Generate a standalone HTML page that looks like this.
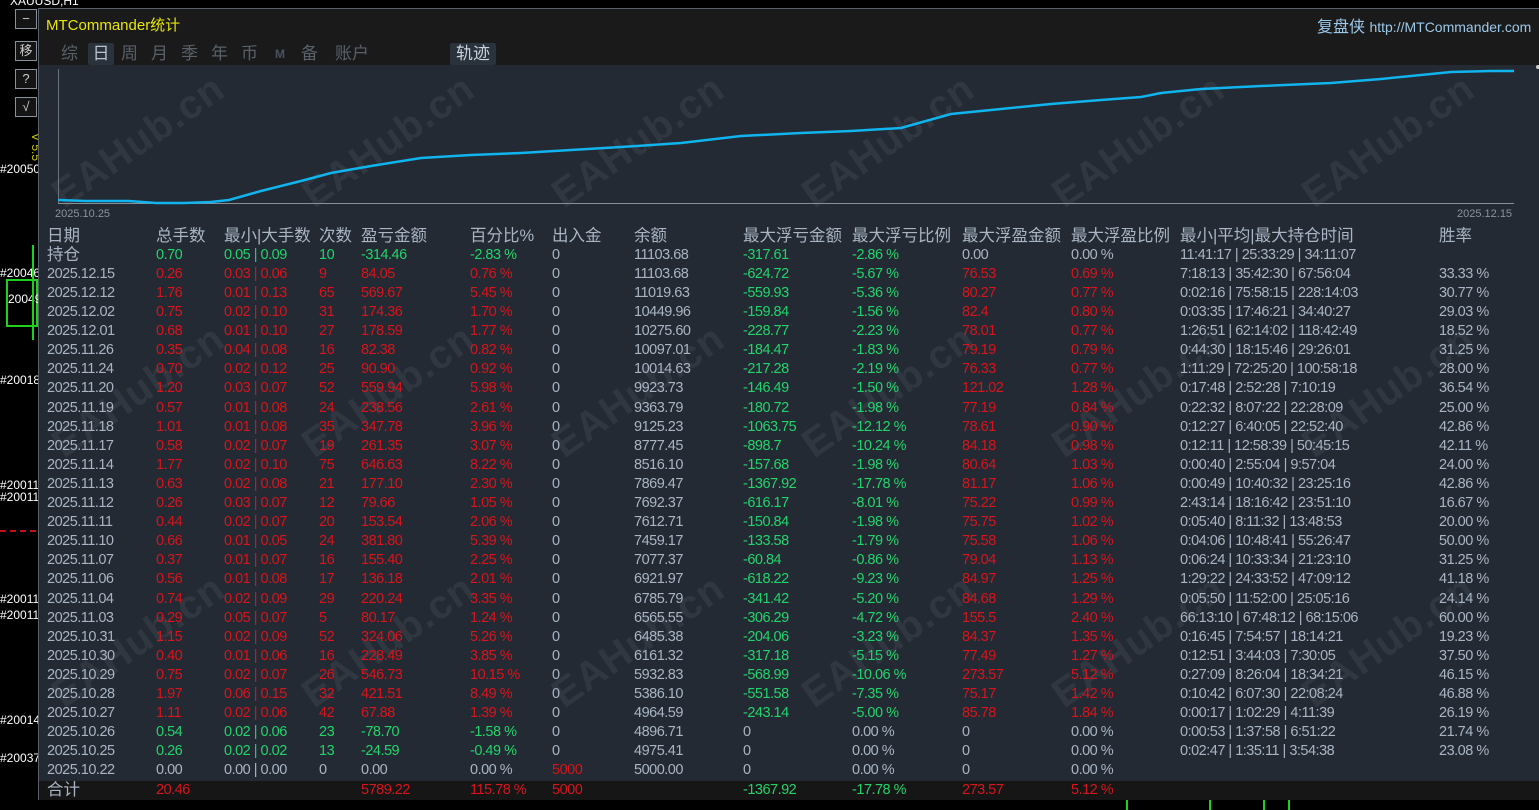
<!DOCTYPE html>
<html><head><meta charset="utf-8">
<style>
*{margin:0;padding:0;box-sizing:border-box}
body{width:1539px;height:810px;background:#000;position:relative;overflow:hidden;font-family:"Liberation Sans","Noto Sans CJK SC",sans-serif}
.abs{position:absolute;white-space:nowrap}
#panel{position:absolute;left:38px;top:8px;width:1501px;height:792px;background:#232a33;border-left:1px solid #5a6068;border-top:1px solid #5a6068;border-bottom:1px solid #5a6068}
#hdr{position:absolute;left:0;top:0;width:100%;height:56px;background:#1a1a1a}
.tab{position:absolute;top:34px;height:22px;font-size:17px;color:#59606a;line-height:22px}
.row{position:absolute;left:0;width:100%;height:19px;font-size:14.5px;line-height:19px;letter-spacing:-0.5px;color:#a9b5c4}
.row span{position:absolute;top:0;white-space:nowrap}
.hd{font-size:16.5px;letter-spacing:0;color:#a9b5c4}
.r{color:#d8141c}.g{color:#22d36b}.w{color:#a9b5c4}
.c1{left:8px}.c2{left:117px}.c3{left:185px}.c4{left:280px}.c5{left:322px}.c6{left:431px}.c7{left:513px}.c8{left:595px}.c9{left:704px}.c10{left:813px}.c11{left:923px}.c12{left:1032px}.c13{left:1141px}.c14{left:1400px}
.wm{position:absolute;font-size:40px;font-weight:bold;color:rgba(150,160,170,0.12);transform:rotate(-35deg);white-space:nowrap;letter-spacing:1px}
.btn{position:absolute;left:15px;width:22px;height:20px;border:1px solid #8a9099;background:#141414;color:#ccc;font-size:13px;text-align:center;line-height:18px}
.lbl{position:absolute;font-size:12px;color:#fff;left:0}
</style></head><body>
<div class="abs" style="left:10px;top:-6px;font-size:12px;color:#fff">XAUUSD,H1</div>
<div class="btn" style="top:9px">−</div>
<div class="btn" style="top:41px">移</div>
<div class="btn" style="top:69px">?</div>
<div class="btn" style="top:97px">√</div>
<div class="abs" style="left:22px;top:140px;font-size:12px;color:#c8c800;transform:rotate(90deg)">V 5.5</div>
<div class="lbl" style="top:162px">#20050</div>
<div class="lbl" style="top:266px">#20046</div>
<div class="abs" style="left:6px;top:279px;width:32px;height:48px;border:2px solid #1ed11e"></div>
<div class="lbl" style="top:292px;left:8px">20049</div>
<div class="abs" style="left:32px;top:245px;width:2px;height:95px;background:#1ed11e"></div>
<div class="lbl" style="top:373px">#20018</div>
<div class="lbl" style="top:478px">#20011</div>
<div class="lbl" style="top:490px">#20011</div>
<div class="abs" style="left:0;top:530px;width:36px;border-top:2px dashed #c01010"></div>
<div class="lbl" style="top:592px">#20011</div>
<div class="lbl" style="top:608px">#20011</div>
<div class="lbl" style="top:713px">#20014</div>
<div class="lbl" style="top:751px">#20037</div>
<div class="abs" style="left:1126px;top:800px;width:2px;height:10px;background:#1ed11e"></div>
<div class="abs" style="left:1209px;top:800px;width:2px;height:10px;background:#1ed11e"></div>
<div class="abs" style="left:1263px;top:800px;width:2px;height:10px;background:#1ed11e"></div>
<div class="abs" style="left:1288px;top:800px;width:2px;height:10px;background:#1ed11e"></div>

<div id="panel">
<div id="hdr">
<div class="abs" style="left:7px;top:5px;font-size:15px;color:#e6e600">MTCommander统计</div>
<div class="abs" style="left:1278px;top:4px;font-size:16px;color:#9cc8ea">复盘侠 <span style="font-size:14px">http://MTCommander.com</span></div>
<div class="tab" style="left:22px">综</div>
<div class="tab" style="left:49px;width:26px;background:#2a323c;color:#b8c4d2;text-align:center;border-radius:2px">日</div>
<div class="tab" style="left:82px">周</div>
<div class="tab" style="left:112px">月</div>
<div class="tab" style="left:142px">季</div>
<div class="tab" style="left:172px">年</div>
<div class="tab" style="left:202px">币</div>
<div class="tab" style="left:236px;font-size:12px;font-weight:bold;color:#4a5260">M</div>
<div class="tab" style="left:262px">备</div>
<div class="tab" style="left:296px">账户</div>
<div class="tab" style="left:411px;width:46px;background:#2a323c;color:#c8d2de;text-align:center;border-radius:2px">轨迹</div>
</div>

<div class="wm" style="left:0px;top:110px">EAHub.cn</div>
<div class="wm" style="left:250px;top:110px">EAHub.cn</div>
<div class="wm" style="left:500px;top:110px">EAHub.cn</div>
<div class="wm" style="left:750px;top:110px">EAHub.cn</div>
<div class="wm" style="left:1000px;top:110px">EAHub.cn</div>
<div class="wm" style="left:1250px;top:110px">EAHub.cn</div>
<div class="wm" style="left:0px;top:360px">EAHub.cn</div>
<div class="wm" style="left:250px;top:360px">EAHub.cn</div>
<div class="wm" style="left:500px;top:360px">EAHub.cn</div>
<div class="wm" style="left:750px;top:360px">EAHub.cn</div>
<div class="wm" style="left:1000px;top:360px">EAHub.cn</div>
<div class="wm" style="left:1250px;top:360px">EAHub.cn</div>
<div class="wm" style="left:0px;top:610px">EAHub.cn</div>
<div class="wm" style="left:250px;top:610px">EAHub.cn</div>
<div class="wm" style="left:500px;top:610px">EAHub.cn</div>
<div class="wm" style="left:750px;top:610px">EAHub.cn</div>
<div class="wm" style="left:1000px;top:610px">EAHub.cn</div>
<div class="wm" style="left:1250px;top:610px">EAHub.cn</div>

<svg class="abs" style="left:-38px;top:-8px" width="1539" height="230">
<line x1="57.5" y1="68" x2="57.5" y2="202" stroke="#6a7078" stroke-width="1"/>
<line x1="57" y1="202.5" x2="1513" y2="202.5" stroke="#8a9098" stroke-width="1"/>
<polyline fill="none" stroke="#10b4ee" stroke-width="2.5" points="57,199 85,200 128,200 155,202 183,202 210,201 228,199 260,190 300,180 330,172 370,165 420,157 470,154 520,152 570,149 620,146 680,142 740,135 800,132 850,130 900,127 950,113 1000,108 1050,103 1100,99 1140,96 1160,92 1200,88 1260,85 1330,82 1380,78 1420,74 1450,71 1490,70 1513,70"/>
<circle cx="1537" cy="66" r="2" fill="#ccc"/>
<text x="54" y="216" font-family="Liberation Sans" font-size="11" fill="#8a939e">2025.10.25</text>
<text x="1456" y="216" font-family="Liberation Sans" font-size="11" fill="#8a939e">2025.12.15</text>
</svg>

<div class="row hd" style="top:218px"><span class="c1">日期</span><span class="c2">总手数</span><span class="c3">最小|大手数</span><span class="c4">次数</span><span class="c5">盈亏金额</span><span class="c6">百分比%</span><span class="c7">出入金</span><span class="c8">余额</span><span class="c9">最大浮亏金额</span><span class="c10">最大浮亏比例</span><span class="c11">最大浮盈金额</span><span class="c12">最大浮盈比例</span><span class="c13">最小|平均|最大持仓时间</span><span class="c14">胜率</span></div>
<div class="row" style="top:237px"><span class="c1 hd">持仓</span><span class="c2 g">0.70</span><span class="c3 g">0.05 | 0.09</span><span class="c4 g">10</span><span class="c5 g">-314.46</span><span class="c6 g">-2.83 %</span><span class="c7">0</span><span class="c8">11103.68</span><span class="c9 g">-317.61</span><span class="c10 g">-2.86 %</span><span class="c11">0.00</span><span class="c12">0.00 %</span><span class="c13">11:41:17 | 25:33:29 | 34:11:07</span></div>
<div class="row" style="top:256px"><span class="c1">2025.12.15</span><span class="c2 r">0.26</span><span class="c3 r">0.03 | 0.06</span><span class="c4 r">9</span><span class="c5 r">84.05</span><span class="c6 r">0.76 %</span><span class="c7">0</span><span class="c8">11103.68</span><span class="c9 g">-624.72</span><span class="c10 g">-5.67 %</span><span class="c11 r">76.53</span><span class="c12 r">0.69 %</span><span class="c13">7:18:13 | 35:42:30 | 67:56:04</span><span class="c14">33.33 %</span></div>
<div class="row" style="top:275px"><span class="c1">2025.12.12</span><span class="c2 r">1.76</span><span class="c3 r">0.01 | 0.13</span><span class="c4 r">65</span><span class="c5 r">569.67</span><span class="c6 r">5.45 %</span><span class="c7">0</span><span class="c8">11019.63</span><span class="c9 g">-559.93</span><span class="c10 g">-5.36 %</span><span class="c11 r">80.27</span><span class="c12 r">0.77 %</span><span class="c13">0:02:16 | 75:58:15 | 228:14:03</span><span class="c14">30.77 %</span></div>
<div class="row" style="top:294px"><span class="c1">2025.12.02</span><span class="c2 r">0.75</span><span class="c3 r">0.02 | 0.10</span><span class="c4 r">31</span><span class="c5 r">174.36</span><span class="c6 r">1.70 %</span><span class="c7">0</span><span class="c8">10449.96</span><span class="c9 g">-159.84</span><span class="c10 g">-1.56 %</span><span class="c11 r">82.4</span><span class="c12 r">0.80 %</span><span class="c13">0:03:35 | 17:46:21 | 34:40:27</span><span class="c14">29.03 %</span></div>
<div class="row" style="top:313px"><span class="c1">2025.12.01</span><span class="c2 r">0.68</span><span class="c3 r">0.01 | 0.10</span><span class="c4 r">27</span><span class="c5 r">178.59</span><span class="c6 r">1.77 %</span><span class="c7">0</span><span class="c8">10275.60</span><span class="c9 g">-228.77</span><span class="c10 g">-2.23 %</span><span class="c11 r">78.01</span><span class="c12 r">0.77 %</span><span class="c13">1:26:51 | 62:14:02 | 118:42:49</span><span class="c14">18.52 %</span></div>
<div class="row" style="top:332px"><span class="c1">2025.11.26</span><span class="c2 r">0.35</span><span class="c3 r">0.04 | 0.08</span><span class="c4 r">16</span><span class="c5 r">82.38</span><span class="c6 r">0.82 %</span><span class="c7">0</span><span class="c8">10097.01</span><span class="c9 g">-184.47</span><span class="c10 g">-1.83 %</span><span class="c11 r">79.19</span><span class="c12 r">0.79 %</span><span class="c13">0:44:30 | 18:15:46 | 29:26:01</span><span class="c14">31.25 %</span></div>
<div class="row" style="top:351px"><span class="c1">2025.11.24</span><span class="c2 r">0.70</span><span class="c3 r">0.02 | 0.12</span><span class="c4 r">25</span><span class="c5 r">90.90</span><span class="c6 r">0.92 %</span><span class="c7">0</span><span class="c8">10014.63</span><span class="c9 g">-217.28</span><span class="c10 g">-2.19 %</span><span class="c11 r">76.33</span><span class="c12 r">0.77 %</span><span class="c13">1:11:29 | 72:25:20 | 100:58:18</span><span class="c14">28.00 %</span></div>
<div class="row" style="top:370px"><span class="c1">2025.11.20</span><span class="c2 r">1.20</span><span class="c3 r">0.03 | 0.07</span><span class="c4 r">52</span><span class="c5 r">559.94</span><span class="c6 r">5.98 %</span><span class="c7">0</span><span class="c8">9923.73</span><span class="c9 g">-146.49</span><span class="c10 g">-1.50 %</span><span class="c11 r">121.02</span><span class="c12 r">1.28 %</span><span class="c13">0:17:48 | 2:52:28 | 7:10:19</span><span class="c14">36.54 %</span></div>
<div class="row" style="top:390px"><span class="c1">2025.11.19</span><span class="c2 r">0.57</span><span class="c3 r">0.01 | 0.08</span><span class="c4 r">24</span><span class="c5 r">238.56</span><span class="c6 r">2.61 %</span><span class="c7">0</span><span class="c8">9363.79</span><span class="c9 g">-180.72</span><span class="c10 g">-1.98 %</span><span class="c11 r">77.19</span><span class="c12 r">0.84 %</span><span class="c13">0:22:32 | 8:07:22 | 22:28:09</span><span class="c14">25.00 %</span></div>
<div class="row" style="top:409px"><span class="c1">2025.11.18</span><span class="c2 r">1.01</span><span class="c3 r">0.01 | 0.08</span><span class="c4 r">35</span><span class="c5 r">347.78</span><span class="c6 r">3.96 %</span><span class="c7">0</span><span class="c8">9125.23</span><span class="c9 g">-1063.75</span><span class="c10 g">-12.12 %</span><span class="c11 r">78.61</span><span class="c12 r">0.90 %</span><span class="c13">0:12:27 | 6:40:05 | 22:52:40</span><span class="c14">42.86 %</span></div>
<div class="row" style="top:428px"><span class="c1">2025.11.17</span><span class="c2 r">0.58</span><span class="c3 r">0.02 | 0.07</span><span class="c4 r">19</span><span class="c5 r">261.35</span><span class="c6 r">3.07 %</span><span class="c7">0</span><span class="c8">8777.45</span><span class="c9 g">-898.7</span><span class="c10 g">-10.24 %</span><span class="c11 r">84.18</span><span class="c12 r">0.98 %</span><span class="c13">0:12:11 | 12:58:39 | 50:45:15</span><span class="c14">42.11 %</span></div>
<div class="row" style="top:447px"><span class="c1">2025.11.14</span><span class="c2 r">1.77</span><span class="c3 r">0.02 | 0.10</span><span class="c4 r">75</span><span class="c5 r">646.63</span><span class="c6 r">8.22 %</span><span class="c7">0</span><span class="c8">8516.10</span><span class="c9 g">-157.68</span><span class="c10 g">-1.98 %</span><span class="c11 r">80.64</span><span class="c12 r">1.03 %</span><span class="c13">0:00:40 | 2:55:04 | 9:57:04</span><span class="c14">24.00 %</span></div>
<div class="row" style="top:466px"><span class="c1">2025.11.13</span><span class="c2 r">0.63</span><span class="c3 r">0.02 | 0.08</span><span class="c4 r">21</span><span class="c5 r">177.10</span><span class="c6 r">2.30 %</span><span class="c7">0</span><span class="c8">7869.47</span><span class="c9 g">-1367.92</span><span class="c10 g">-17.78 %</span><span class="c11 r">81.17</span><span class="c12 r">1.06 %</span><span class="c13">0:00:49 | 10:40:32 | 23:25:16</span><span class="c14">42.86 %</span></div>
<div class="row" style="top:485px"><span class="c1">2025.11.12</span><span class="c2 r">0.26</span><span class="c3 r">0.03 | 0.07</span><span class="c4 r">12</span><span class="c5 r">79.66</span><span class="c6 r">1.05 %</span><span class="c7">0</span><span class="c8">7692.37</span><span class="c9 g">-616.17</span><span class="c10 g">-8.01 %</span><span class="c11 r">75.22</span><span class="c12 r">0.99 %</span><span class="c13">2:43:14 | 18:16:42 | 23:51:10</span><span class="c14">16.67 %</span></div>
<div class="row" style="top:504px"><span class="c1">2025.11.11</span><span class="c2 r">0.44</span><span class="c3 r">0.02 | 0.07</span><span class="c4 r">20</span><span class="c5 r">153.54</span><span class="c6 r">2.06 %</span><span class="c7">0</span><span class="c8">7612.71</span><span class="c9 g">-150.84</span><span class="c10 g">-1.98 %</span><span class="c11 r">75.75</span><span class="c12 r">1.02 %</span><span class="c13">0:05:40 | 8:11:32 | 13:48:53</span><span class="c14">20.00 %</span></div>
<div class="row" style="top:523px"><span class="c1">2025.11.10</span><span class="c2 r">0.66</span><span class="c3 r">0.01 | 0.05</span><span class="c4 r">24</span><span class="c5 r">381.80</span><span class="c6 r">5.39 %</span><span class="c7">0</span><span class="c8">7459.17</span><span class="c9 g">-133.58</span><span class="c10 g">-1.79 %</span><span class="c11 r">75.58</span><span class="c12 r">1.06 %</span><span class="c13">0:04:06 | 10:48:41 | 55:26:47</span><span class="c14">50.00 %</span></div>
<div class="row" style="top:542px"><span class="c1">2025.11.07</span><span class="c2 r">0.37</span><span class="c3 r">0.01 | 0.07</span><span class="c4 r">16</span><span class="c5 r">155.40</span><span class="c6 r">2.25 %</span><span class="c7">0</span><span class="c8">7077.37</span><span class="c9 g">-60.84</span><span class="c10 g">-0.86 %</span><span class="c11 r">79.04</span><span class="c12 r">1.13 %</span><span class="c13">0:06:24 | 10:33:34 | 21:23:10</span><span class="c14">31.25 %</span></div>
<div class="row" style="top:561px"><span class="c1">2025.11.06</span><span class="c2 r">0.56</span><span class="c3 r">0.01 | 0.08</span><span class="c4 r">17</span><span class="c5 r">136.18</span><span class="c6 r">2.01 %</span><span class="c7">0</span><span class="c8">6921.97</span><span class="c9 g">-618.22</span><span class="c10 g">-9.23 %</span><span class="c11 r">84.97</span><span class="c12 r">1.25 %</span><span class="c13">1:29:22 | 24:33:52 | 47:09:12</span><span class="c14">41.18 %</span></div>
<div class="row" style="top:581px"><span class="c1">2025.11.04</span><span class="c2 r">0.74</span><span class="c3 r">0.02 | 0.09</span><span class="c4 r">29</span><span class="c5 r">220.24</span><span class="c6 r">3.35 %</span><span class="c7">0</span><span class="c8">6785.79</span><span class="c9 g">-341.42</span><span class="c10 g">-5.20 %</span><span class="c11 r">84.68</span><span class="c12 r">1.29 %</span><span class="c13">0:05:50 | 11:52:00 | 25:05:16</span><span class="c14">24.14 %</span></div>
<div class="row" style="top:600px"><span class="c1">2025.11.03</span><span class="c2 r">0.29</span><span class="c3 r">0.05 | 0.07</span><span class="c4 r">5</span><span class="c5 r">80.17</span><span class="c6 r">1.24 %</span><span class="c7">0</span><span class="c8">6565.55</span><span class="c9 g">-306.29</span><span class="c10 g">-4.72 %</span><span class="c11 r">155.5</span><span class="c12 r">2.40 %</span><span class="c13">66:13:10 | 67:48:12 | 68:15:06</span><span class="c14">60.00 %</span></div>
<div class="row" style="top:619px"><span class="c1">2025.10.31</span><span class="c2 r">1.15</span><span class="c3 r">0.02 | 0.09</span><span class="c4 r">52</span><span class="c5 r">324.06</span><span class="c6 r">5.26 %</span><span class="c7">0</span><span class="c8">6485.38</span><span class="c9 g">-204.06</span><span class="c10 g">-3.23 %</span><span class="c11 r">84.37</span><span class="c12 r">1.35 %</span><span class="c13">0:16:45 | 7:54:57 | 18:14:21</span><span class="c14">19.23 %</span></div>
<div class="row" style="top:638px"><span class="c1">2025.10.30</span><span class="c2 r">0.40</span><span class="c3 r">0.01 | 0.06</span><span class="c4 r">16</span><span class="c5 r">228.49</span><span class="c6 r">3.85 %</span><span class="c7">0</span><span class="c8">6161.32</span><span class="c9 g">-317.18</span><span class="c10 g">-5.15 %</span><span class="c11 r">77.49</span><span class="c12 r">1.27 %</span><span class="c13">0:12:51 | 3:44:03 | 7:30:05</span><span class="c14">37.50 %</span></div>
<div class="row" style="top:657px"><span class="c1">2025.10.29</span><span class="c2 r">0.75</span><span class="c3 r">0.02 | 0.07</span><span class="c4 r">26</span><span class="c5 r">546.73</span><span class="c6 r">10.15 %</span><span class="c7">0</span><span class="c8">5932.83</span><span class="c9 g">-568.99</span><span class="c10 g">-10.06 %</span><span class="c11 r">273.57</span><span class="c12 r">5.12 %</span><span class="c13">0:27:09 | 8:26:04 | 18:34:21</span><span class="c14">46.15 %</span></div>
<div class="row" style="top:676px"><span class="c1">2025.10.28</span><span class="c2 r">1.97</span><span class="c3 r">0.06 | 0.15</span><span class="c4 r">32</span><span class="c5 r">421.51</span><span class="c6 r">8.49 %</span><span class="c7">0</span><span class="c8">5386.10</span><span class="c9 g">-551.58</span><span class="c10 g">-7.35 %</span><span class="c11 r">75.17</span><span class="c12 r">1.42 %</span><span class="c13">0:10:42 | 6:07:30 | 22:08:24</span><span class="c14">46.88 %</span></div>
<div class="row" style="top:695px"><span class="c1">2025.10.27</span><span class="c2 r">1.11</span><span class="c3 r">0.02 | 0.06</span><span class="c4 r">42</span><span class="c5 r">67.88</span><span class="c6 r">1.39 %</span><span class="c7">0</span><span class="c8">4964.59</span><span class="c9 g">-243.14</span><span class="c10 g">-5.00 %</span><span class="c11 r">85.78</span><span class="c12 r">1.84 %</span><span class="c13">0:00:17 | 1:02:29 | 4:11:39</span><span class="c14">26.19 %</span></div>
<div class="row" style="top:714px"><span class="c1">2025.10.26</span><span class="c2 g">0.54</span><span class="c3 g">0.02 | 0.06</span><span class="c4 g">23</span><span class="c5 g">-78.70</span><span class="c6 g">-1.58 %</span><span class="c7">0</span><span class="c8">4896.71</span><span class="c9">0</span><span class="c10">0.00 %</span><span class="c11">0</span><span class="c12">0.00 %</span><span class="c13">0:00:53 | 1:37:58 | 6:51:22</span><span class="c14">21.74 %</span></div>
<div class="row" style="top:733px"><span class="c1">2025.10.25</span><span class="c2 g">0.26</span><span class="c3 g">0.02 | 0.02</span><span class="c4 g">13</span><span class="c5 g">-24.59</span><span class="c6 g">-0.49 %</span><span class="c7">0</span><span class="c8">4975.41</span><span class="c9">0</span><span class="c10">0.00 %</span><span class="c11">0</span><span class="c12">0.00 %</span><span class="c13">0:02:47 | 1:35:11 | 3:54:38</span><span class="c14">23.08 %</span></div>
<div class="row" style="top:752px"><span class="c1">2025.10.22</span><span class="c2">0.00</span><span class="c3">0.00 | 0.00</span><span class="c4">0</span><span class="c5">0.00</span><span class="c6">0.00 %</span><span class="c7 r">5000</span><span class="c8">5000.00</span><span class="c9">0</span><span class="c10">0.00 %</span><span class="c11">0</span><span class="c12">0.00 %</span></div>
<div class="abs" style="left:0;top:772px;width:100%;height:19px;background:#161616"></div>
<div class="row" style="top:772px"><span class="c1 hd">合计</span><span class="c2 r">20.46</span><span class="c5 r">5789.22</span><span class="c6 r">115.78 %</span><span class="c7 r">5000</span><span class="c9 g">-1367.92</span><span class="c10 g">-17.78 %</span><span class="c11 r">273.57</span><span class="c12 r">5.12 %</span></div>
</div>
</body></html>
